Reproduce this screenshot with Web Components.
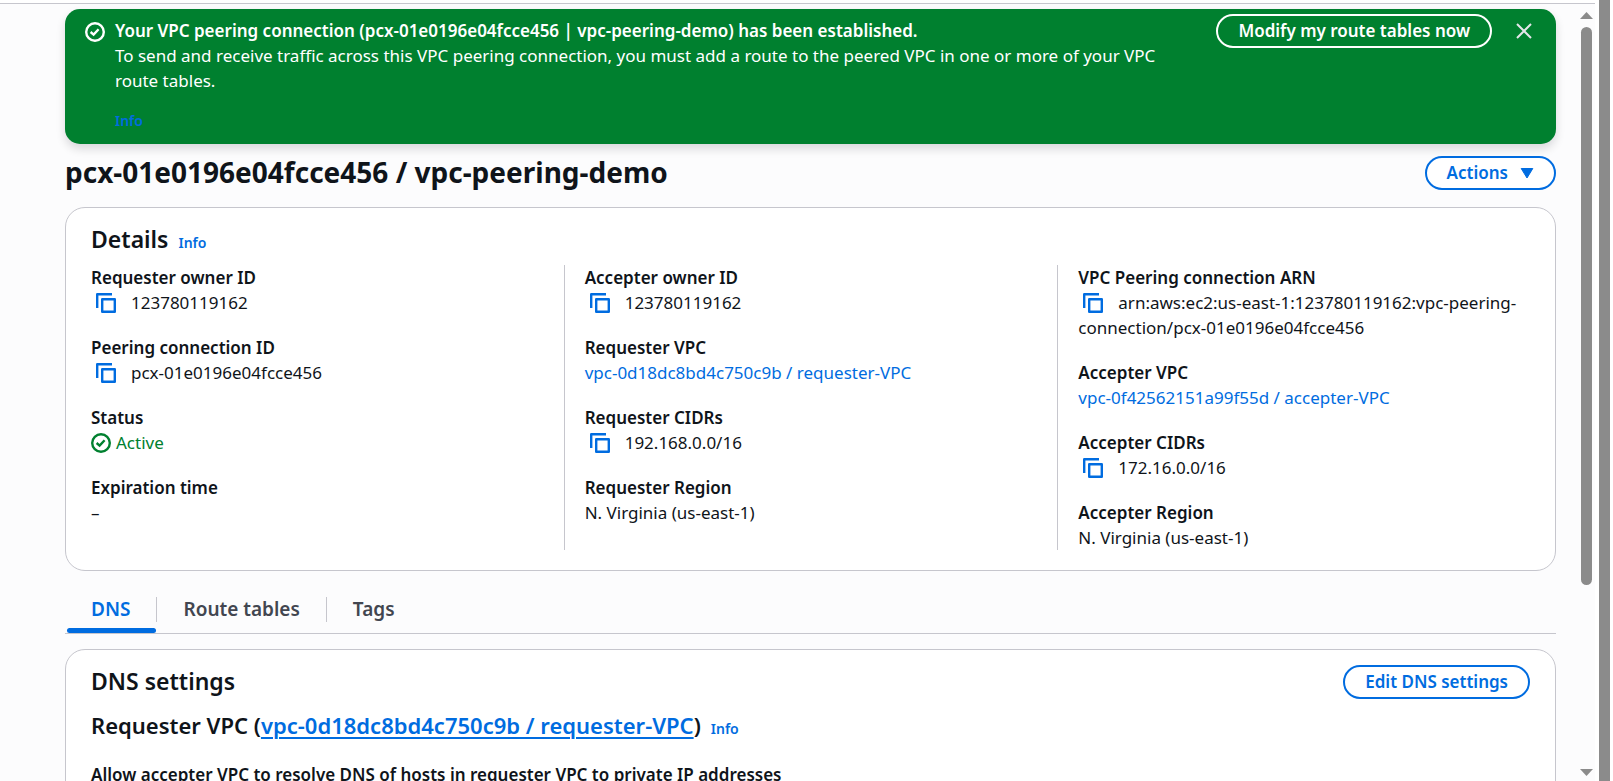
<!DOCTYPE html>
<html lang="en">
<head>
<meta charset="utf-8">
<title>Peering connection details</title>
<style>
  html, body { margin: 0; height: 100%; }
  body {
    --blue: #006ce0;
    --green: #00802f;
    --line: #c6c6cd;
    --ink: #0f141a;
    --grey: #8b8b8b;
    color: var(--ink);
    background: #fff;
    font: 400 17px/25px "Noto Sans", "Open Sans", sans-serif;
    overflow: hidden;
  }
</style>
</head>
<body>
<console-frame>
  <flash-banner>
    <span slot="title">Your VPC peering connection (pcx-01e0196e04fcce456 | vpc-peering-demo) has been established.</span>
    To send and receive traffic across this VPC peering connection, you must add a route to the peered VPC in one or more of your VPC route tables.
    <info-link slot="info"></info-link>
    <pill-button slot="action" tone="light">Modify my route tables now</pill-button>
  </flash-banner>

  <page-header>
    pcx-01e0196e04fcce456 / vpc-peering-demo
    <pill-button slot="action" menu>Actions</pill-button>
  </page-header>

  <panel-card>
    <span slot="title">Details</span>
    <info-link slot="info"></info-link>
    <detail-columns>
      <detail-column>
        <detail-item label="Requester owner ID" copy>123780119162</detail-item>
        <detail-item label="Peering connection ID" copy>pcx-01e0196e04fcce456</detail-item>
        <detail-item label="Status"><status-text>Active</status-text></detail-item>
        <detail-item label="Expiration time">–</detail-item>
      </detail-column>
      <detail-column divided>
        <detail-item label="Accepter owner ID" copy>123780119162</detail-item>
        <detail-item label="Requester VPC"><text-link>vpc-0d18dc8bd4c750c9b / requester-VPC</text-link></detail-item>
        <detail-item label="Requester CIDRs" copy>192.168.0.0/16</detail-item>
        <detail-item label="Requester Region">N. Virginia (us-east-1)</detail-item>
      </detail-column>
      <detail-column divided>
        <detail-item label="VPC Peering connection ARN" copy>arn:aws:ec2:us-east-1:123780119162:vpc-peering-connection/pcx-01e0196e04fcce456</detail-item>
        <detail-item label="Accepter VPC"><text-link>vpc-0f42562151a99f55d / accepter-VPC</text-link></detail-item>
        <detail-item label="Accepter CIDRs" copy>172.16.0.0/16</detail-item>
        <detail-item label="Accepter Region">N. Virginia (us-east-1)</detail-item>
      </detail-column>
    </detail-columns>
  </panel-card>

  <tab-bar></tab-bar>

  <panel-card>
    <span slot="title">DNS settings</span>
    <pill-button slot="action">Edit DNS settings</pill-button>
    <dns-section>
      <text-link slot="vpc" underline>vpc-0d18dc8bd4c750c9b / requester-VPC</text-link>
      <info-link slot="info"></info-link>
      Allow accepter VPC to resolve DNS of hosts in requester VPC to private IP addresses
    </dns-section>
  </panel-card>
</console-frame>

<script>
  const define = (name, render) => customElements.define(name, class extends HTMLElement {
    connectedCallback() {
      if (this.shadowRoot) return;
      const template = document.createElement('template');
      template.innerHTML = render(this).trim();
      this.attachShadow({ mode: 'open' }).append(template.content.cloneNode(true));
    }
  });

  const checkIcon = `
    <svg width="20" height="20" viewBox="0 0 20 20" fill="none" stroke="currentColor" stroke-width="2.4" aria-hidden="true">
      <circle cx="10" cy="10" r="8.8"/><path d="M5.6 10 8.6 12.6 13.6 7.2"/>
    </svg>`;

  define('console-frame', () => `
    <style>
      :host { display: flex; height: 100vh; box-sizing: border-box; padding: 0 3px 0 0; overflow: hidden; }
      .view { flex: 1; min-width: 0; display: flex; margin-top: 3px; border-top: 1px solid var(--line); background: #fcfcfd; }
      main { flex: 1; min-width: 0; overflow: hidden; padding: 5px 22px 0 65px; }
      .track { width: 17px; display: flex; flex-direction: column; align-items: center; padding: 8px 0 5px; box-sizing: border-box; }
      .track svg { display: block; fill: var(--grey); }
      .thumb { width: 11px; height: 73%; margin: 8px 0 auto; border-radius: 6px; background: var(--grey); }
      .edge { width: 11px; margin-left: 4px; background: var(--grey); }
    </style>
    <div class="view">
      <main><slot></slot></main>
      <div class="track" aria-hidden="true">
        <svg width="13" height="7" viewBox="0 0 13 7"><path d="M6.5 0 13 7H0z"/></svg>
        <div class="thumb"></div>
        <svg width="13" height="7" viewBox="0 0 13 7"><path d="M0 0h13L6.5 7z"/></svg>
      </div>
    </div>
    <div class="edge" aria-hidden="true"></div>`);

  define('pill-button', (el) => `
    <style>
      :host { display: inline-block; flex: none; }
      button {
        display: flex; align-items: center; gap: 12px; height: 34px; padding: 0 20px 1px;
        font: inherit; font-size: 17px; font-weight: 600; line-height: 25px; white-space: nowrap; cursor: pointer;
        color: var(--blue); background: #fff; border: 2px solid currentColor; border-radius: 20px;
      }
      :host([tone="light"]) button { color: #fff; background: transparent; }
      svg { fill: currentColor; stroke: currentColor; stroke-linejoin: round; }
    </style>
    <button type="button"><slot></slot>${el.hasAttribute('menu')
      ? '<svg width="14" height="12" viewBox="0 0 14 12" aria-hidden="true"><path d="M1.2 1.5h11.6L7 11z"/></svg>' : ''}</button>`);

  define('info-link', () => `
    <style>
      :host { display: inline-block; line-height: 20px; }
      a { color: var(--blue); font-size: 14px; font-weight: 600; text-decoration: none; }
    </style>
    <a href="#info">Info</a>`);

  define('text-link', () => `<style>
      a { color: var(--blue); text-decoration: none; }
      :host([underline]) a { text-decoration: underline 2px; text-underline-offset: 3px; }
    </style><a href="#vpc"><slot></slot></a>`);

  define('status-text', () => `
    <style>
      :host { display: flex; align-items: center; gap: 5px; color: var(--green); }
    </style>
    ${checkIcon}<span><slot></slot></span>`);

  define('flash-banner', () => `
    <style>
      :host {
        display: flex; align-items: flex-start; padding: 5px 20px 11px; color: #fff; background: var(--green);
        border-radius: 15px; box-shadow: 0 5px 10px rgba(0, 7, 22, .14);
      }
      .mark { flex: none; padding: 8px 10px 0 0; height: 20px; }
      .mark svg { display: block; }
      .body { flex: 1; min-width: 0; padding: 4px 40px 0 0; }
      .title { font-weight: 600; }
      .info { display: flex; align-items: center; height: 25px; margin-top: 15px; }
      .close {
        flex: none; display: flex; align-items: center; justify-content: center; height: 34px; padding: 0 4px; margin-left: 20px;
        color: #e4e6ea; background: none; border: 0; cursor: pointer;
      }
    </style>
    <div class="mark">${checkIcon}</div>
    <div class="body">
      <div class="title"><slot name="title"></slot></div>
      <div><slot></slot></div>
      <div class="info"><slot name="info"></slot></div>
    </div>
    <slot name="action"></slot>
    <button class="close" type="button" aria-label="Close">
      <svg width="16" height="16" viewBox="0 0 16 16" fill="none" stroke="currentColor" stroke-width="2"><path d="m1 1 14 14M15 1 1 15"/></svg>
    </button>`);

  define('page-header', () => `
    <style>
      :host { display: flex; align-items: flex-start; justify-content: space-between; margin: 12px 0 17px; }
      h1 { margin: 0; font-size: 28px; line-height: 32px; font-weight: 700; }
    </style>
    <h1><slot></slot></h1><slot name="action"></slot>`);

  define('panel-card', () => `
    <style>
      :host { display: block; padding: 15px 25px 20px; background: #fff; border: 1px solid var(--line); border-radius: 20px; }
      header { display: flex; align-items: flex-start; justify-content: space-between; min-height: 34px; margin-bottom: 8px; }
      .heading { display: flex; align-items: baseline; gap: 10px; }
      h2 { margin: 0; font-size: 23px; line-height: 32px; font-weight: 600; }
    </style>
    <header>
      <div class="heading"><h2><slot name="title"></slot></h2><slot name="info"></slot></div>
      <slot name="action"></slot>
    </header>
    <slot></slot>`);

  define('detail-columns', () => `
    <style>:host { display: grid; grid-template-columns: repeat(3, minmax(0, 1fr)); column-gap: 42px; }</style>
    <slot></slot>`);

  define('detail-column', () => `
    <style>
      :host { display: flex; flex-direction: column; gap: 20px; }
      :host([divided]) { margin-left: -21px; padding-left: 20px; border-left: 1px solid var(--line); }
    </style>
    <slot></slot>`);

  define('detail-item', (el) => `
    <style>
      :host { display: block; }
      dl, dd { margin: 0; }
      dt { font-weight: 600; }
      button { display: inline-block; vertical-align: top; width: 30px; height: 25px; margin: 0 10px 0 0; padding: 3px 5px 2px; border: 0; background: none; color: var(--blue); cursor: pointer; }
      button svg { display: block; }
    </style>
    <dl>
      <dt>${el.getAttribute('label')}</dt>
      <dd>${el.hasAttribute('copy') ? `<button type="button" aria-label="Copy ${el.getAttribute('label')}"><svg width="20" height="20" viewBox="0 0 20 20" fill="none" stroke="currentColor" stroke-width="2.4" stroke-linejoin="round"><path d="M1.2 15V1.2H16"/><path d="M6.2 6.2h12.6v12.6H6.2z"/></svg></button>` : ''}<slot></slot></dd>
    </dl>`);

  define('tab-bar', () => `
    <style>
      :host { display: flex; margin: 26px 0 15px; border-bottom: 1px solid var(--line); }
      button {
        position: relative; height: 36px; padding: 0; border: 0; background: none; cursor: pointer;
        font: inherit; font-size: 19px; font-weight: 600; line-height: 25px; color: #424650;
      }
      span { display: block; padding: 0 26px; margin-bottom: 11px; border-right: 1px solid var(--line); }
      button:last-child span { border-right: 0; }
      [aria-selected="true"] { color: var(--blue); }
      [aria-selected="true"]::after {
        content: ""; position: absolute; left: 2px; right: 1px; bottom: 0; height: 5px; border-radius: 3px; background: var(--blue);
      }
    </style>
    <button type="button" role="tab" aria-selected="true"><span>DNS</span></button>
    <button type="button" role="tab" aria-selected="false"><span>Route tables</span></button>
    <button type="button" role="tab" aria-selected="false"><span>Tags</span></button>`);

  define('dns-section', () => `
    <style>
      :host { display: block; margin-top: 12px; }
      .heading { display: flex; align-items: baseline; gap: 10px; }
      h3 { margin: 0; font-size: 22px; line-height: 28px; font-weight: 600; }
      p { margin: 23px 0 0; font-weight: 600; }
    </style>
    <div class="heading"><h3>Requester VPC (<slot name="vpc"></slot>)</h3><slot name="info"></slot></div>
    <p><slot></slot></p>`);
</script>
</body>
</html>
